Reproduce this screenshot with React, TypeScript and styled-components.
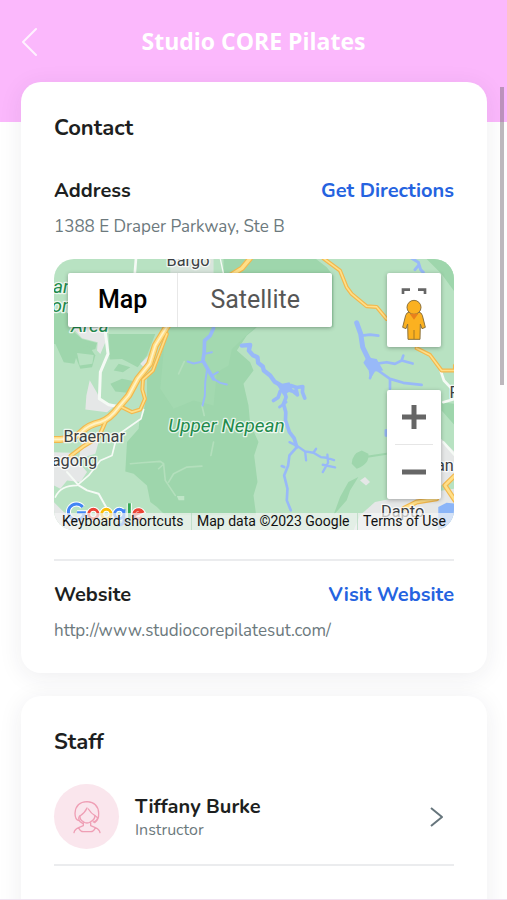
import React from "react";
import styled, { createGlobalStyle } from "styled-components";

const GlobalStyle = createGlobalStyle`
  *, *::before, *::after { box-sizing: border-box; }
  body { margin: 0; background: #fff; }
  h1, h2, h3, p { margin: 0; }
  button { font: inherit; border: 0; padding: 0; background: none; cursor: pointer; }
`;

const ui = `Nunito, Lato, "Open Sans", sans-serif`;
const mapFont = `Roboto, "Liberation Sans", sans-serif`;

const Screen = styled.div`
  height: 100vh;
  display: flex;
  flex-direction: column;
  overflow: hidden;
  font-family: ${ui};
  color: #1d1f21;
  border-bottom: 1px solid #f0e2f0;
`;

const Header = styled.header`
  flex: none;
  display: grid;
  grid-template-columns: 40px 1fr 40px;
  align-items: center;
  height: 122px;
  padding: 0 10px 40px;
  background: #fbb8fc;
`;

const BackButton = styled.button`
  display: flex;
  justify-content: center;
  height: 40px;
  align-items: center;
`;

const Title = styled.h1`
  text-align: center;
  color: #fff;
  font: 700 23px/28px "Open Sans", "Noto Sans", sans-serif;
`;

const Content = styled.main`
  display: flex;
  flex-direction: column;
  gap: 23px;
  margin-top: -40px;
  padding: 0 20px 0 21px;
`;

const Card = styled.section`
  padding: 32px 33px 30px;
  border-radius: 20px;
  background: #fff;
  box-shadow: 0 4px 24px rgba(40, 40, 70, 0.08);
`;

const CardTitle = styled.h2`
  font-size: 22px;
  line-height: 28px;
  font-weight: 700;
`;

const Row = styled.div<{ $top: number }>`
  display: flex;
  justify-content: space-between;
  align-items: center;
  margin-top: ${(p) => p.$top}px;
`;

const Label = styled.h3`
  font-size: 20px;
  line-height: 28px;
  font-weight: 700;
`;

const Action = styled.a`
  font-size: 20px;
  line-height: 28px;
  font-weight: 700;
  color: #2563e0;
  text-decoration: none;
`;

const Detail = styled.p`
  margin-top: 10px;
  font-size: 17px;
  line-height: 24px;
  color: #6c797d;
`;

const Divider = styled.hr`
  height: 2px;
  margin: 29px 0 0;
  border: 0;
  background: #ebecee;
`;

const MapFrame = styled.div`
  position: relative;
  height: 271px;
  margin-top: 20px;
  border-radius: 20px;
  overflow: hidden;
  font-family: ${mapFont};
`;

const MapArt = styled.svg`
  display: block;
  width: 100%;
  height: 100%;
`;

const MapTypes = styled.div`
  position: absolute;
  top: 14px;
  left: 14px;
  display: flex;
  height: 54px;
  background: #fff;
  border-radius: 2px;
  box-shadow: 0 1px 4px rgba(0, 0, 0, 0.3);
`;

const MapType = styled.button<{ $active?: boolean }>`
  padding: 0 ${(p) => (p.$active ? 30 : 32)}px 2px;
  font-size: 25px;
  font-weight: ${(p) => (p.$active ? 500 : 400)};
  color: ${(p) => (p.$active ? "#000" : "#565656")};
  & + & { border-left: 1px solid #e8e8e8; }
`;

const SideControls = styled.div`
  position: absolute;
  top: 14px;
  right: 13px;
  bottom: 31px;
  display: flex;
  flex-direction: column;
  justify-content: space-between;
`;

const ControlBox = styled.div`
  width: 54px;
  background: #fff;
  border-radius: 2px;
  box-shadow: 0 1px 4px rgba(0, 0, 0, 0.3);
`;

const MapButton = styled.button<{ $tall?: boolean }>`
  display: flex;
  align-items: center;
  justify-content: center;
  width: 100%;
  height: ${(p) => (p.$tall ? 74 : 54)}px;
`;

const ZoomRule = styled.hr`
  width: 38px;
  height: 1px;
  margin: 0 auto;
  border: 0;
  background: #e6e6e6;
`;

const MapFooter = styled.div`
  position: absolute;
  left: 0;
  right: 0;
  bottom: 0;
  display: flex;
  justify-content: space-between;
  height: 17px;
  padding: 0 3px;
  background: rgba(245, 245, 245, 0.7);
  font-size: 14px;
  line-height: 17px;
  color: #111;
  white-space: nowrap;
  & > * { padding: 0 5px; }
  & > * + * { border-left: 1px solid rgba(185, 220, 195, 0.8); }
`;

const FooterButton = styled.button`
  color: inherit;
`;

const FooterLink = styled.a`
  color: inherit;
  text-decoration: none;
`;

const StaffRow = styled.a`
  display: flex;
  align-items: center;
  margin-top: 28px;
  padding-right: 10px;
  color: inherit;
  text-decoration: none;
`;

const Avatar = styled.span`
  display: flex;
  align-items: center;
  justify-content: center;
  width: 65px;
  height: 65px;
  margin-right: 16px;
  border-radius: 50%;
  background: #fae6ed;
`;

const StaffText = styled.div`
  flex: 1;
  padding-bottom: 2px;
`;

const StaffRule = styled(Divider)`
  margin: 15px 0 50px;
`;

const Role = styled.p`
  font-size: 16px;
  line-height: 18px;
  color: #6c797d;
`;

const ScrollThumb = styled.div`
  position: fixed;
  top: 87px;
  right: 3px;
  width: 4px;
  height: 298px;
  background: rgba(110, 100, 110, 0.45);
`;

const Place = styled.text<{ $park?: boolean }>`
  font-family: ${mapFont};
  font-size: ${(p) => (p.$park ? 57 : 49)}px;
  font-style: ${(p) => (p.$park ? "italic" : "normal")};
  font-weight: 400;
  fill: ${(p) => (p.$park ? "#218a4b" : "#3c4043")};
  stroke: #fff;
  stroke-opacity: 0.75;
  stroke-width: 8px;
  stroke-linejoin: round;
  paint-order: stroke;
`;

const Line = styled.path`
  fill: none;
  stroke-linecap: round;
  stroke-linejoin: round;
`;

const highways = [
  { d: "M0 552 H30 Q80 548 95 528 Q115 508 150 500 Q180 490 205 455 L235 420 L262 370 L298 325 L315 270 L355 205", w: 18 },
  { d: "M350 235 L325 300 L308 345 L278 372 L276 402 L284 430 L270 462 L245 470 L215 455", w: 9 },
  { d: "M165 500 L145 545 L100 572 L60 602", w: 10 },
  { d: "M600 8 L575 38 L540 60", w: 14 },
  { d: "M820 8 L870 45 L890 95 L905 115 L950 152 L980 154 L1010 190", w: 9 },
  { d: "M1100 278 L1140 298 L1175 345 L1215 345 V330", w: 9 },
  { d: "M1215 660 L1185 690 L1215 735", w: 12 },
  { d: "M1060 760 L1100 740 L1160 730", w: 12 },
];

const minorRoads = [
  { d: "M257 8 L253 60", w: 8 },
  { d: "M165 230 L173 295 L150 350 L147 430 L175 448 L215 455", w: 9 },
  { d: "M280 462 L272 490 L200 540 L185 600 L150 615 L115 660 L80 690 Q30 690 15 725", w: 5 },
  { d: "M50 650 L85 690 L110 705 L145 715 L170 760", w: 6 },
  { d: "M510 8 L520 55", w: 4 },
  { d: "M1172 345 L1182 375 L1215 410 M1180 440 L1215 430", w: 8 },
  { d: "M1180 560 L1215 600", w: 7 },
];

const rivers = [
  { d: "M490 218 L480 240 L463 255 L462 290 L458 315 L475 345 L490 370", w: 11 },
  { d: "M470 345 L465 380 L464 420 L457 450 M490 370 L510 382 L530 387 M458 318 L430 324 L412 318 M463 295 L485 290 M485 360 L503 350", w: 6 },
  { d: "M575 270 L600 268 L596 285 L608 299 L622 305 L624 322 L638 333 L641 345 L660 360 L673 378 L690 388 L705 400", w: 13 },
  { d: "M700 400 L722 390 L740 396 L758 393 L757 410 L764 428 M712 402 L730 408 L742 418 L738 402 M690 408 L684 426 L670 435 M702 405 L708 425 L700 445 L707 470 L706 495 L718 530 L732 548 L740 575", w: 11 },
  { d: "M708 440 L688 455 M740 575 L718 600 L714 630 L702 660 L712 700 L710 735 L722 765 M702 635 L695 632", w: 8 },
  { d: "M718 560 L742 572 L765 588 L790 592 L812 605 L830 607 L852 614 M765 588 L768 615 M790 592 L798 580 M832 598 L834 622 L818 650 M818 628 L855 636", w: 7 },
  { d: "M920 202 L932 235 L938 275 L955 310 L975 330", w: 15 },
  { d: "M935 240 L960 237 L985 240 M975 325 L1010 320 L1035 325 L1055 315 L1088 324 M1055 315 L1060 300 M980 342 L1020 370 L1060 382 L1115 388 M1020 372 L1020 400 M966 350 L960 368", w: 8 },
  { d: "M1085 8 L1105 20 L1112 42 L1120 50 M1105 30 L1095 42 M1008 525 V540", w: 9 },
];

const water = "#98b9f8";

function MapCanvas() {
  return (
    <MapArt viewBox="10 10 1203 814" preserveAspectRatio="xMidYMid slice" role="img" aria-label="Map of Upper Nepean">
      <rect x="0" y="0" width="1230" height="840" fill="#b8e2c2" />
      <g fill="#9ed6ac">
        <path d="M520 0 H785 L830 35 L850 60 V215 H620 L590 240 L560 285 L600 320 L610 345 L580 385 L595 450 L600 505 L625 560 L612 600 L622 680 L610 720 L618 780 H345 L320 755 L300 740 L290 690 L250 655 L225 648 L230 560 L265 520 L268 490 L280 465 L290 420 L290 370 L320 330 L345 260 L365 210 V60 H520 Z" />
        <path d="M0 170 H55 V215 L95 250 L140 262 L135 280 L80 295 L72 325 L40 320 L15 265 H0 Z" />
        <path d="M175 235 H315 L290 300 L262 335 L215 310 L178 312 Z" />
        <path d="M205 325 L240 335 L218 350 L190 345 Z M180 385 L215 370 L255 378 L232 412 L195 408 Z" />
        <path d="M70 290 L115 270 L135 300 L125 335 L90 340 Z" />
        <path d="M905 625 Q905 595 935 585 L955 595 Q960 625 920 640 Z M945 602 L1010 592 V598 L948 608 Z" />
        <path d="M850 780 L870 725 L895 680 L925 665 L900 705 L890 735 Z" />
        <path d="M1175 440 L1215 445 V510 L1175 465 Z M1120 0 H1180 L1215 40 V110 L1175 55 Z" />
      </g>
      <path d="M345 210 H620 L545 280 L535 330 L500 350 L490 450 L430 435 L370 460 L330 400 L340 290 Z" fill="#a3d9b0" />
      <path d="M70 100 H130 L140 120 H70 Z M80 292 L130 298 L126 325 L88 330 Z" fill="#b8e2c2" />
      <g fill="#e5e7e7">
        <path d="M65 215 H170 L165 260 L150 295 L140 285 L142 260 L95 248 Z" />
        <path d="M118 374 L140 412 L150 435 L195 450 L170 470 L105 462 L108 420 Z" />
        <path d="M270 325 L300 295 L300 320 L280 335 Z" />
        <path d="M95 560 L145 558 L135 595 L85 610 Z" />
        <path d="M0 590 L60 592 L110 650 L90 680 L50 675 L30 700 L10 690 Z M10 740 L40 770 L90 790 V826 H0 Z" />
        <path d="M360 8 H490 V55 H360 Z" opacity="0.7" />
        <path d="M910 826 L930 780 L975 740 L1050 725 L1215 700 V826 Z" />
        <path d="M1173 550 L1215 590 V670 L1173 690 Z" />
        <path d="M930 675 L945 665 L960 680 L948 690 Z" />
      </g>
      <path d="M1165 755 L1190 742 L1215 745 V826 H1165 Z" fill="#8bb5f8" />
      <Line d="M240 625 L275 622 L330 618 L340 625 L345 675 L375 720 M325 640 L338 628 M355 680 L370 655 L410 635 L455 632 M490 560 L482 600 M455 450 L462 480 M385 355 L402 318" stroke="#b3dfbc" strokeWidth="5" />
      <path d="M380 722 H402 V735 H385 Z" fill="#bfe5c7" />
      {minorRoads.map((r) => (
        <Line key={r.d} d={r.d} stroke="#f5faf5" strokeWidth={r.w} />
      ))}
      {rivers.map((r) => (
        <Line key={r.d} d={r.d} stroke={water} strokeWidth={r.w} />
      ))}
      <path d="M680 388 L718 380 L728 402 L700 420 Z M950 305 L980 310 L1000 345 L975 348 L960 372 L956 345 L940 322 Z" fill={water} />
      {highways.map((r) => (
        <Line key={r.d} d={r.d} stroke="#f2b84e" strokeWidth={r.w + 3} />
      ))}
      {highways.map((r) => (
        <Line key={r.d} d={r.d} stroke="#ffdf88" strokeWidth={r.w - 4} />
      ))}
      <Line d={highways[0].d} stroke="#fff3c8" strokeWidth={5} />
      <Place x="349" y="31">Bargo</Place>
      <Place $park x="8" y="112">an</Place>
      <Place $park x="3" y="170">on</Place>
      <Place $park x="62" y="228">Area</Place>
      <Place $park x="354" y="530">Upper Nepean</Place>
      <Place x="39" y="560">Braemar</Place>
      <Place x="4" y="633">agong</Place>
      <Place x="993" y="784">Dapto</Place>
      <Place x="1158" y="647">ang</Place>
      <Place x="1199" y="428">F</Place>
      <g fill="none" stroke="#fff" strokeWidth="15">
        <path d="M97 755 A24 24 0 1 0 102 772 H80" />
        <circle cx="129" cy="776" r="14" />
        <circle cx="168" cy="776" r="14" />
        <circle cx="207" cy="776" r="14" />
        <path d="M237 744 V794" />
        <path d="M250 780 L276 769 A14 14 0 1 0 275 786" />
      </g>
      <g fill="none" strokeWidth="9">
        <path d="M97 755 A24 24 0 1 0 102 772 H80" stroke="#4285f4" />
        <circle cx="129" cy="776" r="14" stroke="#ea4335" />
        <circle cx="168" cy="776" r="14" stroke="#fbbc04" />
        <path d="M221 776 A14 14 0 1 0 193 776 A14 14 0 1 0 221 776 M221 762 V798 Q218 812 200 808" stroke="#4285f4" />
        <path d="M237 744 V794" stroke="#34a853" />
        <path d="M250 780 L276 769 A14 14 0 1 0 275 786" stroke="#ea4335" />
      </g>
    </MapArt>
  );
}

function PegmanIcon() {
  return (
    <svg width="28" height="60" viewBox="0 0 84 180" aria-hidden="true">
      <path d="M9 42 V29 H30 M54 29 H75 V42" fill="none" stroke="#666" strokeWidth="8" />
      <rect x="0" y="43" width="84" height="10" fill="#fff" />
      <g fill="#fbb120" stroke="#8b713c" strokeWidth="3" strokeLinejoin="round">
        <path d="M28 96 H56 Q64 97 67 106 L76 142 L66 146 L61 132 L60 178 H24 L23 132 L18 146 L8 142 L17 106 Q20 97 28 96 Z" />
        <circle cx="42" cy="82" r="21" />
      </g>
      <path d="M29 101 H55 L42 119 Z" fill="#e9801c" />
      <path d="M42 150 V177" stroke="#a47824" strokeWidth="3" />
    </svg>
  );
}

function PersonIcon() {
  return (
    <svg width="28" height="34" viewBox="0 0 84 102" fill="none" stroke="#ef9fb5" strokeWidth="4" strokeLinecap="round" strokeLinejoin="round" aria-hidden="true">
      <path d="M18 62 Q6 60 6 40 Q8 6 42 5 Q76 7 77 40 Q78 60 65 68" />
      <path d="M42 24 Q36 38 21 48 Q20 60 31 65 Q42 73 53 65 Q65 60 66 47 Q55 41 46 27" />
      <path d="M66 47 L74 53 Q72 64 61 66 M20 48 Q14 55 21 65 L29 70" />
      <path d="M31 68 V77 L17 83 Q5 88 3 98 M53 68 V77 L67 83 Q79 88 81 98 M17 83 Q22 95 31 95 H53 Q62 95 67 83" />
    </svg>
  );
}

export default function App() {
  return (
    <Screen>
      <GlobalStyle />
      <Header>
        <BackButton type="button" aria-label="Back">
          <svg width="18" height="30" viewBox="0 0 18 30" fill="none" stroke="#fff" strokeOpacity="0.8" strokeWidth="2" strokeLinecap="round" strokeLinejoin="round" aria-hidden="true">
            <path d="M15 3 L2 16 L15 29" />
          </svg>
        </BackButton>
        <Title>Studio CORE Pilates</Title>
      </Header>

      <Content>
        <Card>
          <CardTitle>Contact</CardTitle>
          <Row $top={35}>
            <Label>Address</Label>
            <Action href="#directions">Get Directions</Action>
          </Row>
          <Detail>1388 E Draper Parkway, Ste B</Detail>

          <MapFrame>
            <MapCanvas />
            <MapFooter>
              <FooterButton type="button">Keyboard shortcuts</FooterButton>
              <span>Map data ©2023 Google</span>
              <FooterLink href="#terms">Terms of Use</FooterLink>
            </MapFooter>
            <MapTypes>
              <MapType type="button" $active>Map</MapType>
              <MapType type="button">Satellite</MapType>
            </MapTypes>
            <SideControls>
              <ControlBox>
                <MapButton type="button" $tall aria-label="Street View">
                  <PegmanIcon />
                </MapButton>
              </ControlBox>
              <ControlBox>
                <MapButton type="button" aria-label="Zoom in">
                  <svg width="24" height="24" viewBox="0 0 24 24" stroke="#666" strokeWidth="5" aria-hidden="true">
                    <path d="M0 12 H24 M12 0 V24" />
                  </svg>
                </MapButton>
                <ZoomRule />
                <MapButton type="button" aria-label="Zoom out">
                  <svg width="24" height="24" viewBox="0 0 24 24" stroke="#666" strokeWidth="5" aria-hidden="true">
                    <path d="M0 12 H24" />
                  </svg>
                </MapButton>
              </ControlBox>
            </SideControls>
          </MapFrame>

          <Divider />
          <Row $top={20}>
            <Label>Website</Label>
            <Action href="http://www.studiocorepilatesut.com/">Visit Website</Action>
          </Row>
          <Detail>http://www.studiocorepilatesut.com/</Detail>
        </Card>

        <Card>
          <CardTitle>Staff</CardTitle>
          <StaffRow href="#tiffany-burke">
            <Avatar>
              <PersonIcon />
            </Avatar>
            <StaffText>
              <Label>Tiffany Burke</Label>
              <Role>Instructor</Role>
            </StaffText>
            <svg width="16" height="22" viewBox="0 0 16 22" fill="none" stroke="#66757c" strokeWidth="2" strokeLinejoin="round" aria-hidden="true">
              <path d="M3 2 L14 11 L3 20" />
            </svg>
          </StaffRow>
          <StaffRule />
        </Card>
      </Content>
      <ScrollThumb />
    </Screen>
  );
}
